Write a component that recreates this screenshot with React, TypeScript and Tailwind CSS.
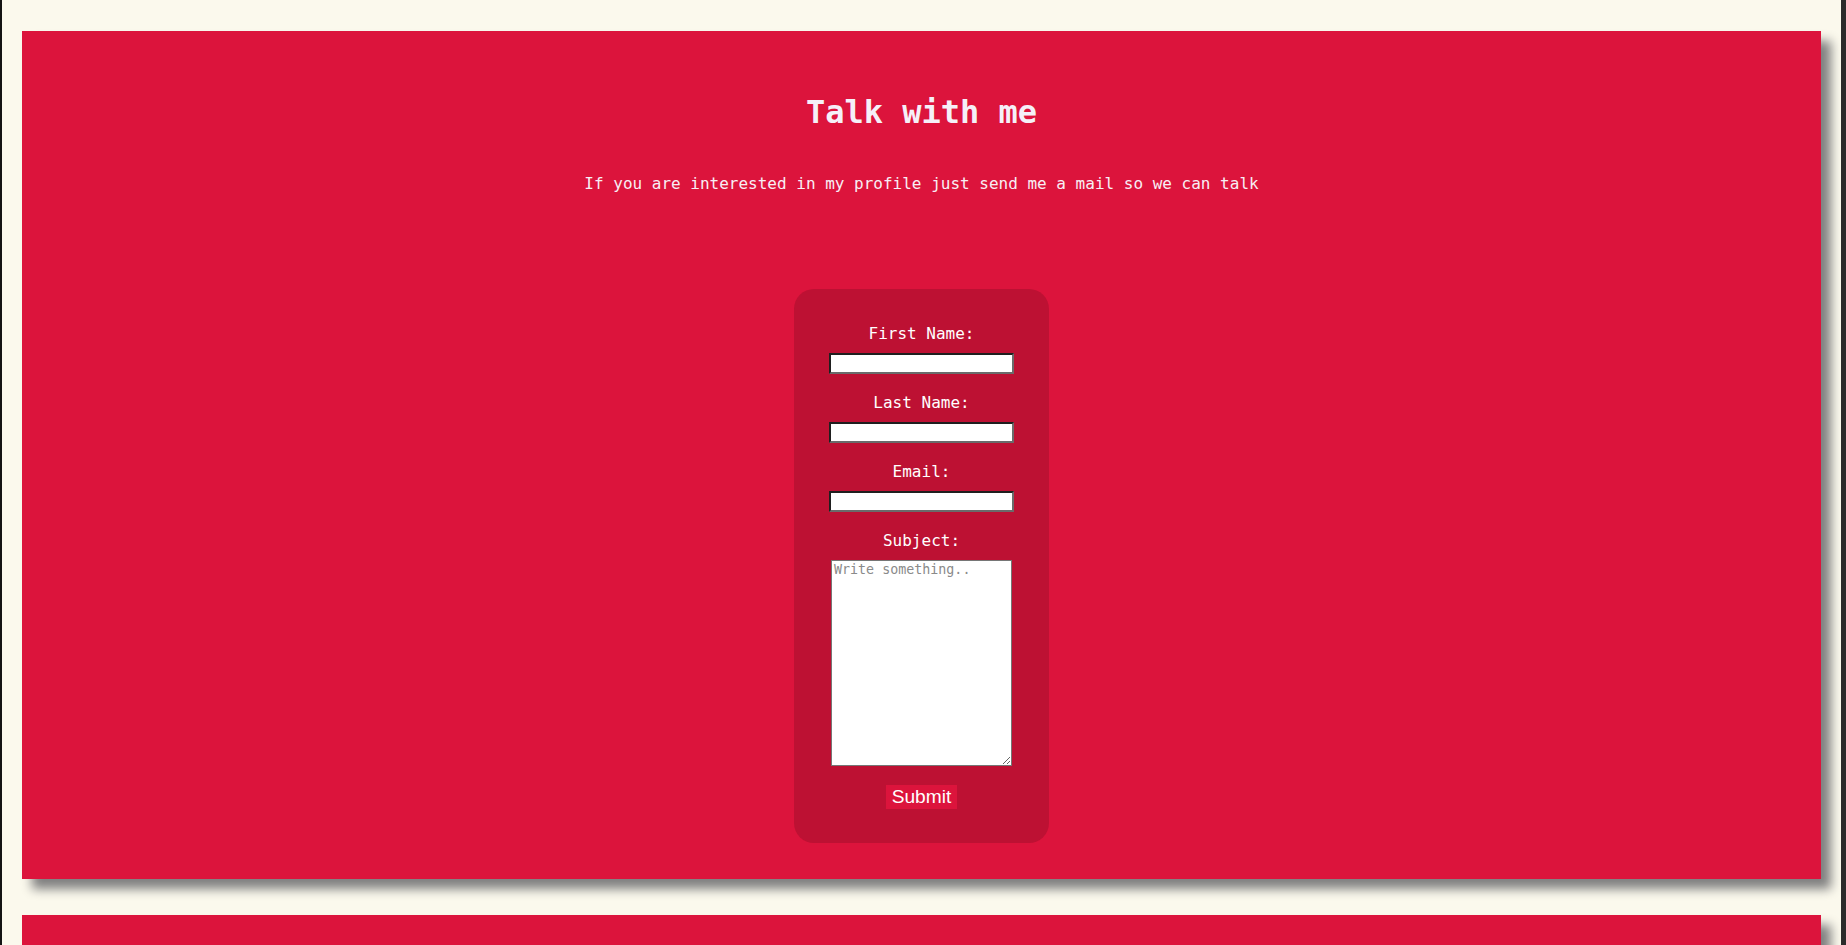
import React from 'react'

const mono = { fontFamily: '"DejaVu Sans Mono", "Liberation Mono", monospace' }

function Field({ label }: { label: string }) {
  return (
    <>
      <label className="text-[16px] leading-[19px] text-white mb-[10px]">{label}</label>
      <input
        type="text"
        className="w-[185px] h-[21px] mb-[19px] bg-white border-2 border-t-[#1f1f1f] border-l-[#1f1f1f] border-b-[#6b6b6b] border-r-[#6b6b6b]"
      />
    </>
  )
}

export default function App() {
  return (
    <div className="flex h-[945px] w-full overflow-hidden bg-[#fbf9ed]">
      <div className="w-[2px] shrink-0 bg-[#141414]" />
      <main className="flex-1 flex flex-col gap-[36px] px-[20px] pt-[31px]" style={mono}>
        <section className="bg-[#dc143c] shadow-[10px_10px_10px_#808080] flex flex-col items-center pt-[63px] pb-[36px]">
          <h1 className="text-[32px] leading-[37px] font-bold text-[#f5f0f8]">Talk with me</h1>
          <p className="mt-[43px] text-[16px] leading-[19px] text-[#f8eef4]">
            If you are interested in my profile just send me a mail so we can talk
          </p>

          <form
            className="mt-[96px] w-[255px] bg-[#bd1133] rounded-[20px] flex flex-col items-center pt-[35px] pb-[34px]"
            onSubmit={(e) => e.preventDefault()}
          >
            <Field label="First Name:" />
            <Field label="Last Name:" />
            <Field label="Email:" />
            <label className="text-[16px] leading-[19px] text-white mb-[10px]">Subject:</label>
            <textarea
              placeholder="Write something.."
              className="w-[181px] h-[206px] bg-white border border-[#767676] px-[2px] py-[1px] text-[13.33px] leading-[16px] placeholder:text-[#8a8a8a]"
              style={mono}
            />
            <button
              type="submit"
              className="mt-[19px] h-[24px] px-[6px] bg-[#dc143c] text-white text-[19.2px] leading-[24px]"
              style={{ fontFamily: '"Liberation Sans", Arial, sans-serif' }}
            >
              Submit
            </button>
          </form>
        </section>

        <section className="bg-[#dc143c] shadow-[10px_10px_10px_#808080] h-[300px] shrink-0" />
      </main>
      <div className="w-[5px] shrink-0 bg-[#2b2b2b]" />
    </div>
  )
}
